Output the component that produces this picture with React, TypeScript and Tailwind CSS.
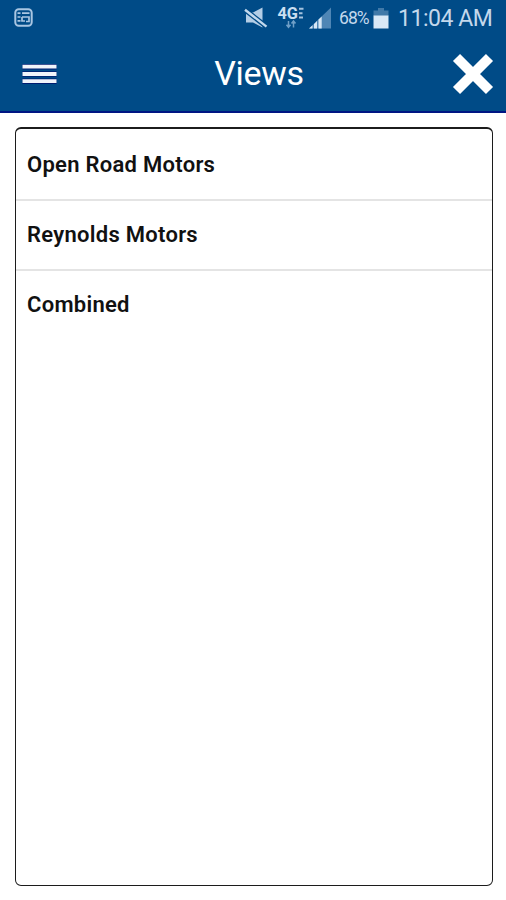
import React from 'react';

const views = ['Open Road Motors', 'Reynolds Motors', 'Combined'];

function NewsIcon() {
  return (
    <svg className="w-[20px] h-[20px]" viewBox="0 0 20 20" fill="none" stroke="#a9c6e2">
      <rect x="1.3" y="1.3" width="16.4" height="16.4" rx="3.5" strokeWidth="2" />
      <path d="M3.500 5.200h3M8 5.200h7.500M3.500 9h3M3.500 12.800h3M8 9h7v4.500h-3M8 9v4h3" strokeWidth="1.700" />
    </svg>
  );
}

function MuteIcon() {
  return (
    <svg className="w-[24px] h-[22px]" viewBox="0 0 24 22">
      <path d="M2 5.500h7l9.500-5v20L9 15.500H2z" fill="#b4cee6" />
      <path d="M1 2.800L22 19.300" stroke="#004b87" strokeWidth="5" />
      <path d="M1 2.800L22.500 19.600" stroke="#c3d9ed" strokeWidth="2.400" />
    </svg>
  );
}

function NetworkIcon() {
  return (
    <svg className="w-[28px] h-[32px]" viewBox="0 -4 28 32">
      <text x="0.500" y="13" textLength="20.500" lengthAdjust="spacingAndGlyphs" fontFamily="Roboto, sans-serif" fontSize="16" fontWeight="700" fill="#c9def0">4G</text>
      <path d="M22 2.700h4.500M22 7.200h3.500M22 11.500h4" stroke="#a5c3df" strokeWidth="2" />
      <path d="M11.500 15v6M9.500 18.800l2 2.500 2-2.500M16.500 21.500v-6M14.500 17.500l2-2.500 2 2.500" fill="none" stroke="#6f9fc7" strokeWidth="1.500" />
    </svg>
  );
}

function SignalIcon() {
  return (
    <svg className="w-[23px] h-[22px]" viewBox="0 0 23 22">
      <path d="M0 21.500L22 .5v21z" fill="#4f86b5" />
      <path d="M0 21.500l3.500-3.300v3.300zM5 17l3-3v7.500H5zM9.500 12.600l3.200-3v11.900H9.500z" fill="#d7e7f5" />
    </svg>
  );
}

function BatteryIcon() {
  return (
    <svg className="w-[16px] h-[21px]" viewBox="0 0 16 21">
      <path d="M5 0h6v2.500h4.500V8H.5V2.500H5z" fill="#4179a8" />
      <path d="M.5 7.500h15v13H.5z" fill="#d9e8f6" />
    </svg>
  );
}

function StatusBar() {
  return (
    <div className="flex items-center justify-between h-9 pl-[14px] pr-[14px] text-[#c3d8ec]">
      <NewsIcon />
      <div className="flex items-center">
        <MuteIcon />
        <div className="ml-[9px]"><NetworkIcon /></div>
        <div className="ml-[4px]"><SignalIcon /></div>
        <span className="ml-[7px] w-[31px] text-[17.5px] leading-9 tracking-[-0.9px] whitespace-nowrap">68%</span>
        <div className="ml-[3px]"><BatteryIcon /></div>
        <span className="ml-[9px] w-[94px] pt-[2px] text-[23px] leading-9 tracking-[-0.45px] whitespace-nowrap">11:04 AM</span>
      </div>
    </div>
  );
}

export default function App() {
  return (
    <div className="flex flex-col w-[506px] h-[900px] bg-white font-['Roboto',sans-serif] overflow-hidden">
      <header className="h-[113px] shrink-0 bg-[#004b87] border-b-2 border-[#001583]">
        <StatusBar />
        <div className="grid grid-cols-3 items-center h-[75px] pl-[22px] pr-[12px] text-white">
          <button aria-label="Menu" className="justify-self-start">
            <svg className="w-[36px] h-[22px]" viewBox="0 0 36 22">
              <path d="M.5 3.700h34M.5 11h34M.5 18.200h34" stroke="#001c70" strokeWidth="5.500" />
              <path d="M.5 3.700h34M.5 11h34M.5 18.200h34" stroke="#f0f4fa" strokeWidth="3.800" />
            </svg>
          </button>
          <h1 className="justify-self-center pl-[2px] pb-[2px] text-[34px] leading-none tracking-[-0.3px]">Views</h1>
          <button aria-label="Close" className="justify-self-end">
            <svg className="w-[42px] h-[42px]" viewBox="0 0 42 42">
              <path d="M4.500 4.500l33 33M37.500 4.500l-33 33" stroke="#fff" strokeWidth="10" />
            </svg>
          </button>
        </div>
      </header>

      <main className="flex-1 pt-[14px] pb-[14px] pl-[15px] pr-[13px]">
        <ul className="h-full border border-t-2 border-[#1c1c1c] rounded-[6px] pt-[2px]">
          {views.map((view, i) => (
            <li
              key={view}
              className={`flex items-center h-[70px] pl-[11px] text-[22px] font-semibold tracking-[0.28px] text-[#111] ${i < views.length - 1 ? 'border-b-2 border-[#e4e4e4]' : 'pb-[2px]'}`}
            >
              <span className="pb-[2px]">{view}</span>
            </li>
          ))}
        </ul>
      </main>
    </div>
  );
}
